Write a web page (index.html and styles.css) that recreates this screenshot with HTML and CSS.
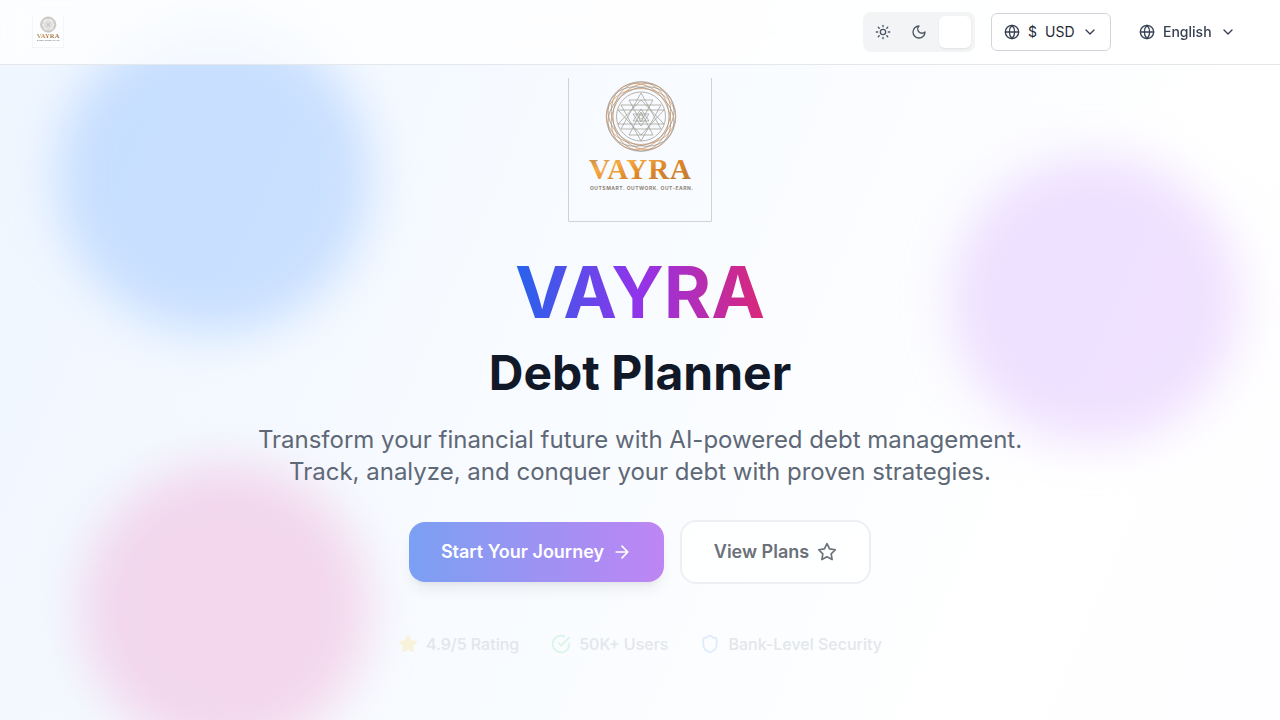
FILE: index.html
```html
<!DOCTYPE html>
<html lang="en">
<head>
<meta charset="utf-8">
<title>VAYRA Debt Planner</title>
<link rel="stylesheet" href="styles.css">
</head>
<body>
<svg class="defs" aria-hidden="true">
  <defs>
    <linearGradient id="gold" x1="0" y1="0" x2="1" y2="1"><stop offset="0" stop-color="#ad8250"/><stop offset=".3" stop-color="#f5ac42"/><stop offset=".6" stop-color="#db8528"/><stop offset="1" stop-color="#b87938"/></linearGradient>
    <g id="petals"><ellipse cx="73" cy="38.500" rx="34.500" ry="28"/></g>
    <symbol id="brand" viewBox="0 0 144 144">
      <path class="frame" d="M.5 0V143.5H143.5V0"/>
      <g class="rings">
        <circle cx="73" cy="38.500" r="34.800"/><circle cx="73" cy="38.500" r="24.500"/>
        <g class="copper"><use href="#petals"/><use href="#petals" transform="rotate(60 73 38.5)"/><use href="#petals" transform="rotate(120 73 38.5)"/></g>
        <use href="#petals" transform="rotate(30 73 38.5)"/><use href="#petals" transform="rotate(90 73 38.5)"/><use href="#petals" transform="rotate(150 73 38.5)"/>
      </g>
      <g class="yantra">
        <path d="M73 15 93 51H53ZM73 63 53 27H93ZM73 22 96 46H50ZM73 57 50 32H96ZM61 22H85L73 44ZM61 57H85L73 34ZM73 31 81 43H65ZM73 48 65 36H81Z"/>
        <circle cx="73" cy="39" r="2"/>
      </g>
      <text class="wordmark" x="21" y="101" textLength="102">VAYRA</text>
      <text class="tagline" x="22" y="112.300" textLength="103">OUTSMART. OUTWORK. OUT-EARN.</text>
    </symbol>
    <symbol id="globe" viewBox="0 0 24 24"><circle cx="12" cy="12" r="10"/><path d="M12 2a14.500 14.500 0 0 0 0 20 14.500 14.500 0 0 0 0-20M2 12h20"/></symbol>
    <symbol id="chevron" viewBox="0 0 24 24"><path d="m6 9 6 6 6-6"/></symbol>
    <symbol id="star" viewBox="0 0 24 24"><path d="M12 2l3.090 6.260L22 9.270l-5 4.870 1.180 6.880L12 17.770l-6.180 3.250L7 14.140 2 9.270l6.910-1.010z"/></symbol>
  </defs>
</svg>
<header class="topbar">
  <svg class="brand-small"><use href="#brand"/></svg>
  <div class="controls">
    <div class="theme-switch">
      <span class="theme-option"><svg class="icon s16" viewBox="0 0 24 24"><circle cx="12" cy="12" r="4"/><path d="M12 2v2M12 20v2M4.930 4.930l1.410 1.410M17.660 17.660l1.410 1.410M2 12h2M20 12h2M6.340 17.660l-1.410 1.410M19.070 4.930l-1.410 1.410"/></svg></span>
      <span class="theme-option"><svg class="icon s16" viewBox="0 0 24 24"><path d="M12 3a6 6 0 0 0 9 9 9 9 0 1 1-9-9Z"/></svg></span>
      <span class="theme-option selected"></span>
    </div>
    <div class="select currency"><svg class="icon s16"><use href="#globe"/></svg><span class="label">$</span><span class="label">USD</span><svg class="icon s16 end"><use href="#chevron"/></svg></div>
    <div class="select language"><svg class="icon s16"><use href="#globe"/></svg><span class="label">English</span><svg class="icon s16"><use href="#chevron"/></svg></div>
  </div>
</header>
<main class="hero">
  <div class="blob blue"></div>
  <div class="blob purple"></div>
  <div class="blob pink"></div>
  <div class="content">
    <svg class="brand-large"><use href="#brand"/></svg>
    <h1 class="title">VAYRA</h1>
    <h2 class="subtitle">Debt Planner</h2>
    <p class="lead">Transform your financial future with AI-powered debt management.<br>Track, analyze, and conquer your debt with proven strategies.</p>
    <div class="actions">
      <a class="button primary"><span class="label">Start Your Journey</span><svg class="icon s20" viewBox="0 0 24 24"><path d="M5 12h14M12 5l7 7-7 7"/></svg></a>
      <a class="button secondary"><span class="label">View Plans</span><svg class="icon s20"><use href="#star"/></svg></a>
    </div>
    <div class="stats">
      <div class="stat"><svg class="icon s20 rating"><use href="#star"/></svg>4.9/5 Rating</div>
      <div class="stat"><svg class="icon s20 users" viewBox="0 0 24 24"><path d="M22 11.080V12a10 10 0 1 1-5.930-9.140M22 4 12 14.010l-3-3"/></svg>50K+ Users</div>
      <div class="stat"><svg class="icon s20 security" viewBox="0 0 24 24"><path d="M20 13c0 5-3.500 7.500-7.660 8.950a1 1 0 0 1-.67-.01C7.500 20.500 4 18 4 13V6a1 1 0 0 1 1-1c2 0 4.500-1.200 6.240-2.720a1.170 1.170 0 0 1 1.520 0C14.510 3.810 17 5 19 5a1 1 0 0 1 1 1z"/></svg>Bank-Level Security</div>
    </div>
  </div>
</main>
</body>
</html>
```
FILE: styles.css
```css
* { box-sizing: border-box; }
body { margin: 0; height: 720px; overflow: hidden; font-family: Inter, sans-serif; color: #111827; }
.defs { position: absolute; width: 0; height: 0; }
.icon { fill: none; stroke: currentColor; stroke-width: 2; stroke-linecap: round; stroke-linejoin: round; flex: none; }
.s16 { width: 16px; height: 16px; }
.s20 { width: 20px; height: 20px; }
.label { padding-bottom: 2px; }

.topbar { position: fixed; z-index: 5; top: 0; left: 0; right: 0; height: 65px; padding: 0 32px; display: flex; align-items: center; justify-content: space-between; background: rgba(255,255,255,.8); border-bottom: 1px solid #e5e7eb; backdrop-filter: blur(12px); }
.brand-small { width: 32px; height: 32px; filter: saturate(.65) brightness(.88); }
.controls { display: flex; align-items: center; gap: 16px; font-size: 14px; font-weight: 500; color: #374151; }
.theme-switch { display: flex; gap: 4px; width: 112px; height: 40px; padding: 4px; background: #f3f4f6; border-radius: 8px; color: #4b5563; }
.theme-option { width: 32px; height: 32px; display: grid; place-items: center; border-radius: 6px; }
.selected { background: #fff; box-shadow: 0 1px 2px rgba(0,0,0,.08); }
.select { display: flex; align-items: center; gap: 8px; height: 38px; padding: 0 12px; border-radius: 6px; }
.currency { width: 120px; background: #fff; border: 1px solid #d1d5db; font-weight: 400; }
.currency .label { color: #1f2937; }
.end { margin-left: -1px; }
.language { width: 121px; }

.hero { position: relative; height: 720px; padding-top: 78px; overflow: hidden; background: linear-gradient(to bottom right, #eff6ff, #fff 50%, #faf5ff) 0 0 / 100% 3000px no-repeat; }
.blob { position: absolute; border-radius: 50%; filter: blur(24px); }
.blue { left: 57px; top: 20px; width: 314px; height: 314px; background: rgba(150,194,254,.46); }
.purple { left: 951px; top: 156px; width: 288px; height: 288px; background: rgba(216,180,254,.4); }
.pink { left: 81px; top: 464px; width: 288px; height: 288px; background: rgba(240,171,214,.44); }
.content { position: relative; display: flex; flex-direction: column; align-items: center; text-align: center; }

.brand-large { width: 144px; height: 144px; }
.frame { fill: none; stroke: #d0d3d8; stroke-width: 1; }
.rings { fill: none; stroke: #a39a8e; stroke-width: .75; }
.copper { stroke: #d3935d; }
.yantra { fill: none; stroke: #a09e94; stroke-width: .75; }
.wordmark { font: bold 29px "Liberation Serif", serif; fill: url(#gold); stroke: none; }
.tagline { font: bold 5px Inter, sans-serif; fill: #8d8575; stroke: none; }

.title { margin: 34px 0 0; font-size: 72px; line-height: 72px; font-weight: 700; color: transparent; background: linear-gradient(to right, #2563eb, #9333ea, #db2777); background-clip: text; -webkit-background-clip: text; }
.subtitle { margin: 21px 0 0; font-size: 48px; line-height: 48px; font-weight: 700; }
.lead { margin: 27px 0 0; font-size: 24px; line-height: 32px; color: #5e6876; }
.actions { display: flex; align-items: center; gap: 16px; margin-top: 32px; }
.button { display: flex; align-items: center; justify-content: center; gap: 8px; border-radius: 16px; font-size: 18px; font-weight: 600; }
.primary { width: 255px; height: 60px; color: #fff; background: linear-gradient(to right, #7ba0f3, #be85f3); box-shadow: 0 10px 15px -3px rgba(0,0,0,.07), 0 4px 6px -4px rgba(0,0,0,.07); }
.secondary { width: 191px; height: 64px; color: #6b7079; background: rgba(255,255,255,.7); border: 2px solid #eeeff2; }
.stats { display: flex; gap: 32px; margin-top: 48px; font-size: 16px; line-height: 24px; font-weight: 500; color: #e3e6eb; }
.stat { display: flex; align-items: center; gap: 8px; }
.rating { color: #f8f2da; fill: currentColor; }
.users { color: #d8f5e5; }
.security { color: #dceafe; }
```
